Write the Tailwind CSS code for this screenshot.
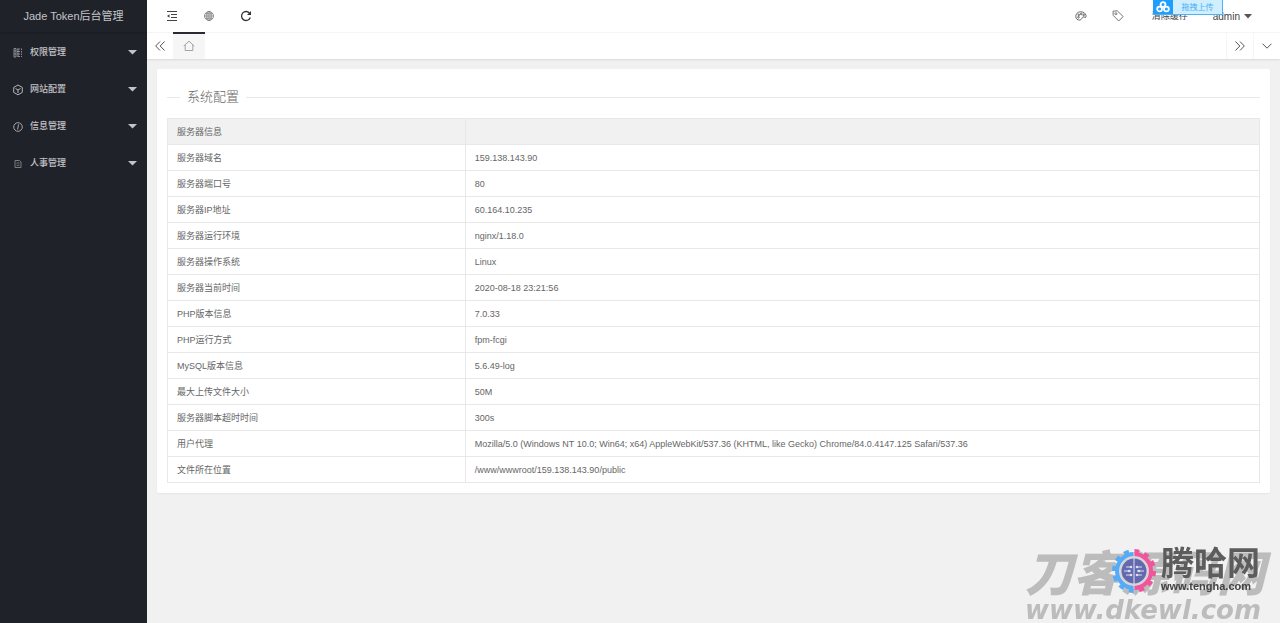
<!DOCTYPE html>
<html lang="zh-CN">
<head>
<meta charset="utf-8">
<title>Jade Token后台管理</title>
<script src="https://cdn.jsdelivr.net/npm/@tailwindcss/browser@4"></script>
</head>
<body class="flex min-h-screen bg-[#f1f1f1] font-['Liberation_Sans','Noto_Sans_CJK_SC',sans-serif] text-[9px] leading-[13px] text-[#666]">

<aside class="w-[147px] shrink-0 bg-[#20222a] text-[#c3c4c7]">
  <h1 class="flex h-8 items-center justify-center text-[11px] shadow-[0_1px_2px_rgba(0,0,0,0.2)]">Jade Token后台管理</h1>
  <nav class="pt-[2px] font-medium">
    <button class="flex h-[37px] w-full items-center pr-[10px] pl-3">
      <svg class="mr-[6px] h-3 w-3" viewBox="0 0 12 12" fill="none" stroke="#97989d" stroke-width=".9"><path d="M2 1.500h2v8.500H2zM2 4h2M2 7h2M5 2h3M5 4.500h3M5 7h3M5.500 9.500h2.500M6 2v7.500M9.500 1.500v1.500M9.500 4v1.500M9.500 6.500V8M9.500 9v1"/></svg>
      <span class="flex-1 text-left">权限管理</span>
      <svg class="h-[5px] w-[9px]" viewBox="0 0 9 5" fill="#c3c4c7"><path d="M0 0h9L4.500 4.500z"/></svg>
    </button>
    <button class="flex h-[37px] w-full items-center pr-[10px] pl-3">
      <svg class="mr-[6px] h-3 w-3" viewBox="0 0 12 12" fill="none" stroke="#b5b6b9"><path d="M6 1l4.300 2.400v5L6 10.800 1.700 8.400v-5zM3.500 4.500L6 6l2.500-1.500M6 6v3"/></svg>
      <span class="flex-1 text-left">网站配置</span>
      <svg class="h-[5px] w-[9px]" viewBox="0 0 9 5" fill="#c3c4c7"><path d="M0 0h9L4.500 4.500z"/></svg>
    </button>
    <button class="flex h-[37px] w-full items-center pr-[10px] pl-3">
      <svg class="mr-[6px] h-3 w-3" viewBox="0 0 12 12" fill="none" stroke="#a5a6aa"><circle cx="6" cy="6" r="4.300"/><path d="M6.600 3.300L5.600 8.500"/></svg>
      <span class="flex-1 text-left">信息管理</span>
      <svg class="h-[5px] w-[9px]" viewBox="0 0 9 5" fill="#c3c4c7"><path d="M0 0h9L4.500 4.500z"/></svg>
    </button>
    <button class="flex h-[37px] w-full items-center pr-[10px] pl-3">
      <svg class="mr-[6px] h-3 w-3" viewBox="0 0 12 12" fill="none" stroke="#7c7d82"><path d="M3 2.500h4.500L9 4v5.500H3zM4.500 5h3M4.500 7.300h3"/></svg>
      <span class="flex-1 text-left">人事管理</span>
      <svg class="h-[5px] w-[9px]" viewBox="0 0 9 5" fill="#c3c4c7"><path d="M0 0h9L4.500 4.500z"/></svg>
    </button>
  </nav>
</aside>

<div class="min-w-0 flex-1">
  <header class="flex h-[33px] items-center justify-between border-b border-[#f6f6f6] bg-white text-[#444]">
    <div class="flex items-center gap-[25px] pl-[19px]">
      <button aria-label="收起菜单"><svg class="block h-3 w-3" viewBox="0 0 12 12" fill="none" stroke="#444"><path d="M1 1.500h10M5 4.500h6M5 7.500h6M1 10.500h10"/><path d="M1 6L3.500 4.300v3.400z" fill="#444" stroke="none"/></svg></button>
      <button aria-label="前台"><svg class="block h-3 w-3" viewBox="0 0 12 12" fill="none" stroke="#777" stroke-width=".8"><circle cx="6" cy="6" r="4.500"/><ellipse cx="6" cy="6" rx="2.200" ry="4.500"/><path d="M6 1.600v8.800M1.600 6h8.800M2.300 3.800h7.400M2.300 8.200h7.400"/></svg></button>
      <button aria-label="刷新"><svg class="block h-3 w-3" viewBox="0 0 12 12" fill="none" stroke="#333" stroke-width="1.300"><path d="M9.800 3.500A4.500 4.500 0 1 0 10.300 7.500"/><path d="M11 1v4H7z" fill="#333" stroke="none"/></svg></button>
    </div>
    <div class="flex items-center pr-7">
      <button class="mr-[25px]" aria-label="主题"><svg class="block h-3 w-3" viewBox="0 0 12 12" fill="none" stroke="#555" stroke-width=".9"><path d="M3.500 10C1 9.500.500 7 1 5.200 2 2 5 1.300 7.500 2 10 2.700 11.500 5 11 7 10.500 8.300 9.300 6.500 8 7 6.500 7.700 7 10.500 3.500 10z"/><circle cx="3.500" cy="7.200" r=".8"/><circle cx="3.800" cy="4.800" r=".8"/><circle cx="6.200" cy="3.900" r=".8"/><circle cx="8.600" cy="5" r=".8"/></svg></button>
      <button class="mr-[28px]" aria-label="便签"><svg class="block h-3 w-3" viewBox="0 0 12 12" fill="none" stroke="#666" stroke-width=".9"><path d="M1 1.200l4.200-.4 6 5.700-4.500 4.500-5.500-5.600z"/><circle cx="3.900" cy="3.700" r="1"/></svg></button>
      <button class="mr-[25px]">清除缓存</button>
      <button class="flex items-center gap-1 text-[10px]">admin<svg class="h-[5px] w-[8px]" viewBox="0 0 8 5" fill="#555"><path d="M0 0h8L4 4.500z"/></svg></button>
    </div>
  </header>

  <div class="relative flex h-[26px] items-stretch bg-white shadow-[0_1px_2px_rgba(0,0,0,0.1)]">
    <button class="flex w-[26px] items-center justify-center" aria-label="向左"><svg class="h-[10px] w-[10px]" viewBox="0 0 10 10" fill="none" stroke="#555"><path d="M5 .500L.700 5 5 9.500M9.500.500L5.200 5l4.300 4.500"/></svg></button>
    <button class="-mt-px flex w-8 items-center justify-center border-t-2 border-[#292b34] bg-[#f6f6f6] pb-[2px]" aria-label="主页"><svg class="h-3 w-3" viewBox="0 0 12 12" fill="none" stroke="#999" stroke-width=".9"><path d="M.700 6L6 1.200 11.300 6M2.200 5v5.500h7.600V5"/></svg></button>
    <span class="flex-1"></span>
    <button class="flex w-[27px] items-center justify-center border-l border-[#f6f6f6]" aria-label="向右"><svg class="h-[10px] w-[10px]" viewBox="0 0 10 10" fill="none" stroke="#555"><path d="M.500.500L4.800 5 .500 9.500M5 .500L9.300 5 5 9.500"/></svg></button>
    <button class="flex w-[27px] items-center justify-center border-l border-[#f6f6f6]" aria-label="标签操作"><svg class="h-[6px] w-[10px]" viewBox="0 0 10 6" fill="none" stroke="#555"><path d="M.500.700L5 5.200 9.500.700"/></svg></button>
  </div>

  <main class="p-[10px]">
    <section class="rounded-[2px] bg-white px-[10px] pt-[18px] pb-[10px] shadow-[0_1px_2px_rgba(0,0,0,0.05)]">
      <fieldset class="border-t border-[#e8e8e8] pb-[11px]">
        <legend class="ml-[13px] px-[7px] text-[13px] leading-5 font-light">系统配置</legend>
      </fieldset>
      <table class="w-full table-fixed border-collapse text-left [&_td]:border [&_td]:border-[#e8e8e8] [&_td]:px-[9px] [&_td]:pt-[2px] [&_th]:border [&_th]:border-[#e8e8e8] [&_th]:px-[9px] [&_th]:pt-[2px] [&_tr]:h-[26px]">
        <colgroup><col class="w-3/11"><col></colgroup>
        <thead><tr class="bg-[#f1f1f1]"><th class="font-normal" scope="col">服务器信息</th><th></th></tr></thead>
        <tbody>
          <tr><td>服务器域名</td><td>159.138.143.90</td></tr>
          <tr><td>服务器端口号</td><td>80</td></tr>
          <tr><td>服务器IP地址</td><td>60.164.10.235</td></tr>
          <tr><td>服务器运行环境</td><td>nginx/1.18.0</td></tr>
          <tr><td>服务器操作系统</td><td>Linux</td></tr>
          <tr><td>服务器当前时间</td><td>2020-08-18 23:21:56</td></tr>
          <tr><td>PHP版本信息</td><td>7.0.33</td></tr>
          <tr><td>PHP运行方式</td><td>fpm-fcgi</td></tr>
          <tr><td>MySQL版本信息</td><td>5.6.49-log</td></tr>
          <tr><td>最大上传文件大小</td><td>50M</td></tr>
          <tr><td>服务器脚本超时时间</td><td>300s</td></tr>
          <tr><td>用户代理</td><td>Mozilla/5.0 (Windows NT 10.0; Win64; x64) AppleWebKit/537.36 (KHTML, like Gecko) Chrome/84.0.4147.125 Safari/537.36</td></tr>
          <tr><td>文件所在位置</td><td>/www/wwwroot/159.138.143.90/public</td></tr>
        </tbody>
      </table>
    </section>
  </main>
</div>

<!-- Upload badge over the header -->
<button class="fixed top-0 right-[57px] flex h-[15px] w-[70px] items-stretch border-r border-b border-[#4fb2f5] bg-[#cfeefe] text-[8px] text-[#4aaef5]">
  <span class="flex w-5 items-center justify-center bg-[#1e9fff]"><svg class="h-3 w-[14px]" viewBox="0 0 14 12" fill="none" stroke="#fff" stroke-width="1.800"><circle cx="7" cy="3.600" r="2.400"/><circle cx="3.600" cy="8" r="2.400"/><circle cx="10.400" cy="8" r="2.400"/></svg></span>
  <span class="flex flex-1 items-center justify-center">拖拽上传</span>
</button>

<!-- Site marks -->
<div class="pointer-events-none fixed right-[15px] bottom-0 text-[#bcbcbc] italic">
  <p class="text-[48px] leading-[44px] font-black">刀客源码网</p>
  <p class="font-['DejaVu_Sans'] text-[26px] leading-[26px] font-bold">www.dkewl.com</p>
</div>
<div class="pointer-events-none fixed right-5 bottom-7 flex items-center gap-1">
  <svg class="h-[46px] w-[46px]" viewBox="0 0 46 46" fill="none">
    <defs>
      <clipPath id="left"><path d="M0 0h22.500v46H0z"/></clipPath>
      <clipPath id="right"><path d="M23.500 0H46v46H23.500z"/></clipPath>
    </defs>
    <circle cx="23" cy="23" r="18" fill="#d6d6da"/>
    <g clip-path="url(#left)" stroke="#55abf6"><circle cx="23" cy="23" r="17" stroke-width="4"/><circle cx="23" cy="23" r="20" stroke-width="4" pathLength="120" stroke-dasharray="5 5"/></g>
    <g clip-path="url(#right)" stroke="#f0559b"><circle cx="23" cy="23" r="17" stroke-width="4"/><circle cx="23" cy="23" r="20" stroke-width="4" pathLength="120" stroke-dasharray="5 5"/></g>
    <circle cx="23" cy="23" r="12.500" fill="#6269ae"/>
    <path d="M23 10v26M15 19h6M13 23h7M15 27h6M25 19h6M26 23h7M25 27h6" stroke="#dedff0"/>
    <g fill="#dedff0"><circle cx="20" cy="19" r="1.300"/><circle cx="18" cy="23" r="1.300"/><circle cx="20" cy="27" r="1.300"/><circle cx="26" cy="19" r="1.300"/><circle cx="28" cy="23" r="1.300"/><circle cx="26" cy="27" r="1.300"/></g>
  </svg>
  <div class="text-[#5c5c5c]">
    <p class="text-[33px] leading-[34px] font-bold">腾哈网</p>
    <p class="pb-1 text-[11px] leading-[10px] font-bold text-[#444]">www.tengha.com</p>
  </div>
</div>
</body>
</html>
